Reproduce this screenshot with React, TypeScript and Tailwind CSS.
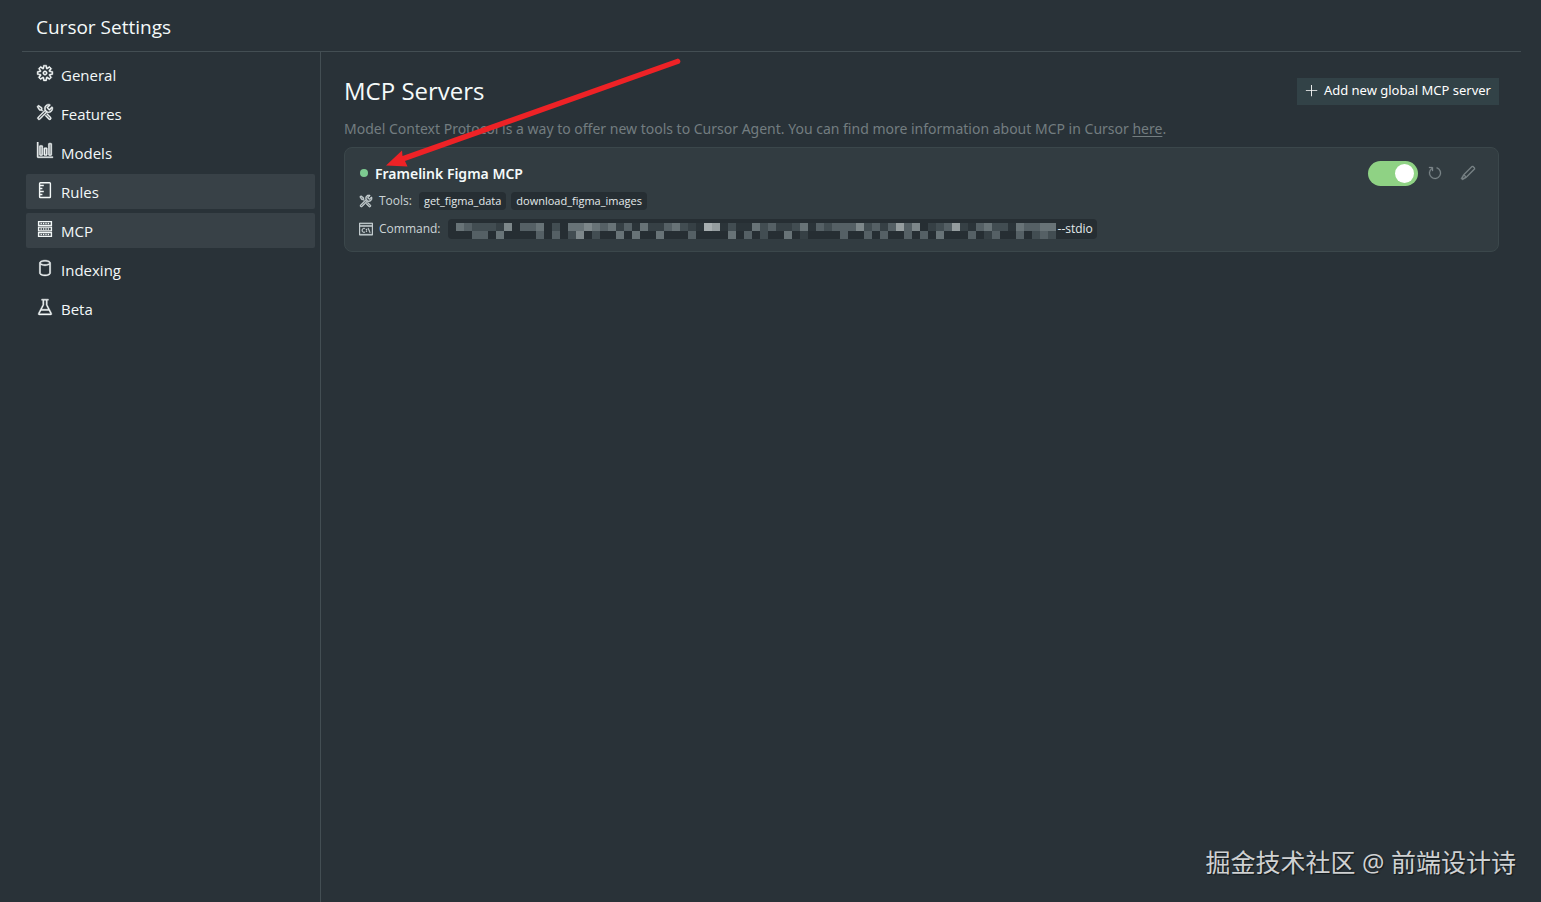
import React from 'react';
import {
  VscAdd,
  VscBeaker,
  VscDatabase,
  VscEdit,
  VscGear,
  VscGraph,
  VscRefresh,
  VscTerminalCmd,
  VscTools,
} from 'react-icons/vsc';
import { clsx } from 'clsx';

const RulerIcon = () => (
  <svg width="18" height="18" viewBox="0 0 18 18" fill="none" stroke="currentColor" aria-hidden="true">
    <rect x="3.6" y="1.7" width="10.8" height="14.8" rx="0.8" strokeWidth="1.4" />
    <path d="M3.600 4.500h4.200M3.600 7.500h2.800M3.600 10.500h4.200M3.600 13.500h2.800" strokeWidth="1.3" />
  </svg>
);

const ServerIcon = () => (
  <svg width="18" height="18" viewBox="0 0 18 18" fill="none" stroke="currentColor" aria-hidden="true">
    <path d="M2.600 1.600h12.800v3.800H2.600zM2.600 7.100h12.800v3.800H2.600zM2.600 12.600h12.800v3.800H2.600z" strokeWidth="1.4" />
    <path d="M4.500 3.500h9M4.500 9h9M4.500 14.500h9" strokeWidth="1.4" strokeDasharray="1.4 1" />
  </svg>
);

const navItems = [
  { label: 'General', icon: <VscGear size={18} strokeWidth={0.4} /> },
  { label: 'Features', icon: <VscTools size={18} strokeWidth={0.4} /> },
  { label: 'Models', icon: <VscGraph size={18} strokeWidth={0.4} /> },
  { label: 'Rules', icon: <RulerIcon />, highlighted: true },
  { label: 'MCP', icon: <ServerIcon />, highlighted: true },
  { label: 'Indexing', icon: <VscDatabase size={18} strokeWidth={0.4} /> },
  { label: 'Beta', icon: <VscBeaker size={18} strokeWidth={0.4} /> },
];

const tools = ['get_figma_data', 'download_figma_images'];

// Brightness of each 8px cell in the redacted command, 0 = no cell
const maskRows = [
  '543332604450305565452415224532187131153422351434446342474602347214533154455',
  '004405000040403603005050050004000050403005020000400404004040500040240040343',
];
const maskShades = [
  'none', '#2b3439', '#364045', '#424d52', '#556065',
  '#687377', '#7d878a', '#959d9f', '#a6adaf',
];

const CommandMask = () => (
  <svg width="600" height="16" viewBox="0 0 600 16" shapeRendering="crispEdges" role="img" aria-label="Hidden command">
    {maskRows.map((row, y) =>
      row.split('').map((level, x) => (
        <rect key={`${x}-${y}`} x={x * 8} y={y * 8} width="8" height="8" fill={maskShades[Number(level)]} />
      ))
    )}
  </svg>
);

const Sidebar = () => (
  <nav className="w-[299px] shrink-0 border-r border-[#434e53] pt-[5px] pr-[5px] pl-1">
    <ul className="flex flex-col gap-1">
      {navItems.map((item) => (
        <li key={item.label}>
          <a
            href="#"
            className={clsx(
              'flex h-[35px] items-center gap-[7px] rounded-xs px-[10px] text-[15px] text-[#f3f8f8]',
              item.highlighted && 'bg-[#384147]'
            )}
          >
            <span className="pb-1">{item.icon}</span>
            <span className="pt-[2px]">{item.label}</span>
          </a>
        </li>
      ))}
    </ul>
  </nav>
);

const ServerCard = () => {
  const [enabled, setEnabled] = React.useState(true);

  return (
    <section className="flex justify-between rounded-lg border border-[#3b474b] bg-[#323c41] pt-3 pr-[22px] pb-2 pl-[14px]">
      <div className="flex flex-col">
        <h2 className="flex h-[26px] items-center gap-[7px] pl-px font-['Noto_Sans',sans-serif] text-[14px] font-semibold text-[#f5fafa]">
          <span className="size-2 rounded-full bg-[#7dcb91]" />
          Framelink Figma MCP
        </h2>
        <div className="flex h-7 items-center pt-px text-[12px] text-[#ccd4d6]">
          <VscTools size={14} strokeWidth={0.6} className="mr-[6px]" />
          <span className="mr-[7px]">Tools:</span>
          <div className="flex gap-[5px] pt-px">
            {tools.map((tool) => (
              <span key={tool} className="h-[18px] rounded bg-[#262e33] px-[5px] text-[11px] leading-[18px] text-[#e4eaeb]">
                {tool}
              </span>
            ))}
          </div>
        </div>
        <div className="flex h-[29px] items-center pt-px text-[12px] text-[#ccd4d6]">
          <VscTerminalCmd size={14} strokeWidth={0.6} className="mr-[6px]" />
          <span className="mr-[7px]">Command:</span>
          <span className="flex h-5 items-end gap-[2px] rounded bg-[#262e33] pr-1 pl-2 text-[12px] leading-5 text-[#e4eaeb]">
            <CommandMask />
            --stdio
          </span>
        </div>
      </div>
      <div className="flex h-[26px] items-center text-[#7c8689]">
        <label className="relative mr-[9px] h-[25px] w-[50px] cursor-pointer">
          <input
            type="checkbox"
            role="switch"
            aria-label="Enable Framelink Figma MCP"
            checked={enabled}
            onChange={() => setEnabled(!enabled)}
            className="peer size-full cursor-pointer appearance-none rounded-full bg-[#4b555a] checked:bg-[#8fd284]"
          />
          <span className="pointer-events-none absolute top-[3px] left-1 size-[19px] rounded-full bg-white peer-checked:left-[27px]" />
        </label>
        <button type="button" aria-label="Refresh" className="mr-[17px]">
          <VscRefresh size={16} strokeWidth={0.3} />
        </button>
        <button type="button" aria-label="Edit">
          <VscEdit size={16} strokeWidth={0.4} />
        </button>
      </div>
    </section>
  );
};

const Arrow = () => (
  <svg
    width="296"
    height="110"
    viewBox="0 0 296 110"
    fill="#ee2226"
    className="pointer-events-none absolute top-[58px] left-[386px]"
    aria-hidden="true"
  >
    <path d="M0 107.500 L16 92.500 L16.500 98 L292 0.500 Q296 2.500 293.500 5.500 L19 103 L21.500 108.500 Z" />
  </svg>
);

export default function App() {
  return (
    <div className="relative flex min-h-screen flex-col bg-[#293238] pr-[20px] pl-[22px] font-['Open_Sans','Noto_Sans_CJK_SC',sans-serif]">
      <header className="flex h-[52px] items-center border-b border-[#434e53] px-[14px] pt-1">
        <h1 className="text-[19px] text-[#f5fafa]">Cursor Settings</h1>
      </header>

      <div className="flex flex-1">
        <Sidebar />
        <main className="min-w-0 flex-1 pt-[22px] pr-[22px] pl-[23px]">
          <div className="flex h-[34px] items-center justify-between">
            <h2 className="text-[24px] text-[#f5fafa]">MCP Servers</h2>
            <button
              type="button"
              className="flex h-[27px] items-center gap-[5px] bg-[#324247] px-2 font-['Noto_Sans',sans-serif] text-[13px] text-white"
            >
              <VscAdd size={14} />
              Add new global MCP server
            </button>
          </div>
          <p className="mt-[10px] mb-[7px] font-['Noto_Sans',sans-serif] text-[14px] leading-[22px] text-[#737d80]">
            Model Context Protocol is a way to offer new tools to Cursor Agent. You can find more information about MCP
            in Cursor{' '}
            <a href="#" className="underline underline-offset-2">
              here
            </a>
            .
          </p>
          <ServerCard />
        </main>
      </div>

      <Arrow />
      <p className="absolute right-[25px] bottom-[21px] text-[25px] text-[#cfd1d2] [text-shadow:1px_1px_1px_#11171a]">
        掘金技术社区 @ 前端设计诗
      </p>
    </div>
  );
}
